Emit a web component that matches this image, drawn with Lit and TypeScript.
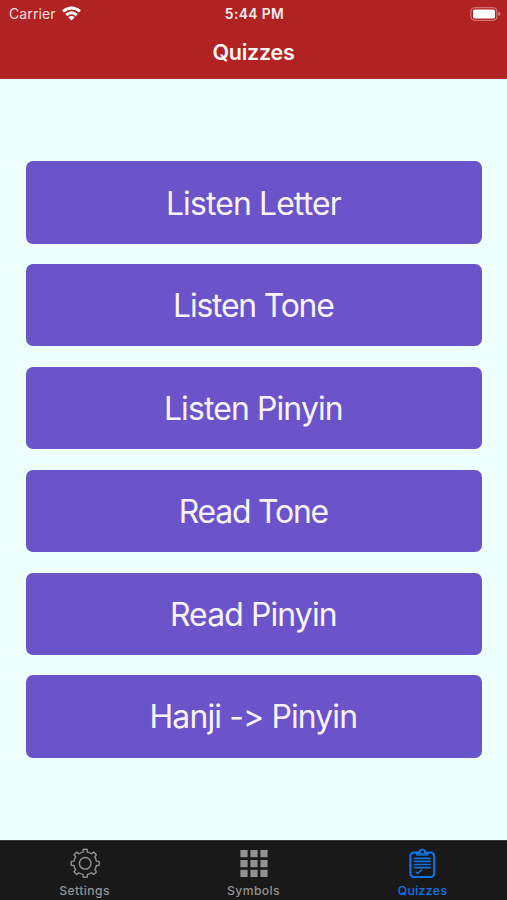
import { LitElement, html, css, svg } from "lit";
import { customElement, property } from "lit/decorators.js";

const QUIZZES = [
  { name: "Listen Letter", fit: "" },
  { name: "Listen Tone", fit: "tight" },
  { name: "Listen Pinyin", fit: "" },
  { name: "Read Tone", fit: "tight" },
  { name: "Read Pinyin", fit: "" },
  { name: "Hanji -> Pinyin", fit: "" },
];

function gearPath(teeth: number, cx: number, cy: number, inner: number, outer: number): string {
  const step = (Math.PI * 2) / teeth;
  const at = (r: number, a: number) => `${(cx + r * Math.sin(a)).toFixed(2)} ${(cy - r * Math.cos(a)).toFixed(2)}`;
  let d = "";
  for (let i = 0; i < teeth; i++) {
    const a = i * step;
    d += `${i ? "L" : "M"}${at(inner, a - step * 0.25)}L${at(outer, a - step * 0.18)}`;
    d += `A${outer} ${outer} 0 0 1 ${at(outer, a + step * 0.18)}L${at(inner, a + step * 0.25)}`;
    d += `A${inner} ${inner} 0 0 1 ${at(inner, a + step * 0.75)}`;
  }
  return d + "Z";
}

const ICONS = {
  settings: svg`<g fill="none" stroke="currentColor" stroke-width="1.4" stroke-linejoin="round">
    <path d=${gearPath(8, 16.2, 16.3, 11.4, 14)}></path><circle cx="16.2" cy="16.3" r="5.8"></circle></g>`,
  symbols: svg`<g fill="currentColor">${[3, 13, 22.8].map((y) =>
    [2.4, 12.4, 22.4].map((x) => svg`<rect x=${x} y=${y} width="7.2" height="7.2"></rect>`))}</g>`,
  quizzes: svg`<g fill="none" stroke="currentColor" stroke-linecap="round" stroke-linejoin="round" transform="translate(-0.7 0)">
    <rect x="4.1" y="5.6" width="23.8" height="24.4" rx="3.4" stroke-width="2.1"></rect>
    <path d="M10.2 7.8V6.3Q10.2 5.3 11.4 5.3H12.4Q13 2 16 2T19.6 5.3H20.6Q21.8 5.3 21.8 6.3V7.8Z" fill="currentColor" stroke-width="1"></path>
    <circle cx="16" cy="4.9" r="1.7" fill="#191919" stroke="none"></circle>
    <path d="M8.3 11.4H23.7M8.3 14.4H23.7M8.3 17.5H23.7M8.3 20.6H23.7" stroke-width="1.6"></path>
    <path d="M9.6 25L11.4 26.6L15.2 23.1" stroke-width="1.4"></path></g>`,
};

@customElement("status-bar")
class StatusBar extends LitElement {
  static styles = css`
    :host { display: grid; grid-template-columns: 1fr auto 1fr; align-items: center; height: 27px; padding: 0 7px 0 9px; font-size: 14px; line-height: 27px; }
    .carrier { display: flex; align-items: center; gap: 6px; letter-spacing: 0.1px; color: #f9dfdf; }
    .time { font-size: 13.8px; line-height: 25px; padding-top: 2px; font-weight: 600; letter-spacing: 0.4px; color: #fdeeee; }
    .battery { justify-self: end; margin-right: -1px; }
    svg { display: block; }
  `;
  render() {
    return html`
      <div class="carrier">Carrier
        <svg width="19" height="15" viewBox="0 0 19 15">
          <g fill="none" stroke="#fff" stroke-width="2.9">
            <path d="M1 5.3Q9.5 -1.5 18 5.3"></path><path d="M4.2 9Q9.5 4.7 14.8 9"></path>
          </g>
          <path d="M6.3 11.3Q9.5 8.8 12.7 11.3L9.5 14.6Z" fill="#fff"></path>
        </svg>
      </div>
      <div class="time">5:44 PM</div>
      <svg class="battery" width="31" height="14" viewBox="0 0 31 14">
        <rect x="0.9" y="0.7" width="26" height="12.6" rx="3.4" fill="none" stroke="#dc8585"></rect>
        <rect x="3" y="2.6" width="22" height="9" rx="1.6" fill="#fff"></rect>
        <path d="M28.4 4.8Q30.2 5.4 30.2 7T28.4 9.2Z" fill="#dc8585"></path>
      </svg>`;
  }
}

@customElement("tab-item")
class TabItem extends LitElement {
  @property() icon: keyof typeof ICONS = "settings";
  @property() label = "";
  static styles = css`
    :host { display: flex; flex-direction: column; align-items: center; flex: 1; padding-top: 6px; color: #929292; }
    :host([active]) { color: #0e76e4; }
    svg { display: block; }
    .label { font-size: 12.2px; line-height: 15px; margin-top: 4px; font-weight: 500; letter-spacing: 0.4px; }
  `;
  render() {
    return html`<svg width="32" height="32" viewBox="0 0 32 32">${ICONS[this.icon]}</svg>
      <div class="label">${this.label}</div>`;
  }
}

@customElement("app-root")
class AppRoot extends LitElement {
  static styles = css`
    :host { display: flex; flex-direction: column; height: 900px; overflow: hidden; background: #eeffff; font-family: Inter, "Liberation Sans", sans-serif; color: #fff; }
    header { height: 79px; background: #b12222; box-sizing: border-box; border-bottom: 1px solid #b63434; }
    h1 { margin: 0; text-align: center; font-size: 21.5px; line-height: 50px; font-weight: 600; letter-spacing: -0.25px; color: #fff6f6; }
    main { flex: 1; display: flex; flex-direction: column; justify-content: center; gap: 20.6px; padding: 0 25.3px 0 26px; }
    button { height: 82.2px; border: 0; border-radius: 7px; padding: 2px 1px 0 0; background: #6b53ca; color: #f8f3ff; font: 400 31.9px/80px Inter, "Liberation Sans", sans-serif; letter-spacing: -0.86px; }
    button.tight { letter-spacing: -1.2px; }
    nav { display: flex; height: 60px; background: #191919; box-sizing: border-box; border-top: 1px solid #393b3b; }
  `;
  render() {
    return html`
      <header><status-bar></status-bar><h1>Quizzes</h1></header>
      <main>${QUIZZES.map((quiz) => html`<button class=${quiz.fit}>${quiz.name}</button>`)}</main>
      <nav>
        <tab-item icon="settings" label="Settings"></tab-item>
        <tab-item icon="symbols" label="Symbols"></tab-item>
        <tab-item icon="quizzes" label="Quizzes" active></tab-item>
      </nav>`;
  }
}
